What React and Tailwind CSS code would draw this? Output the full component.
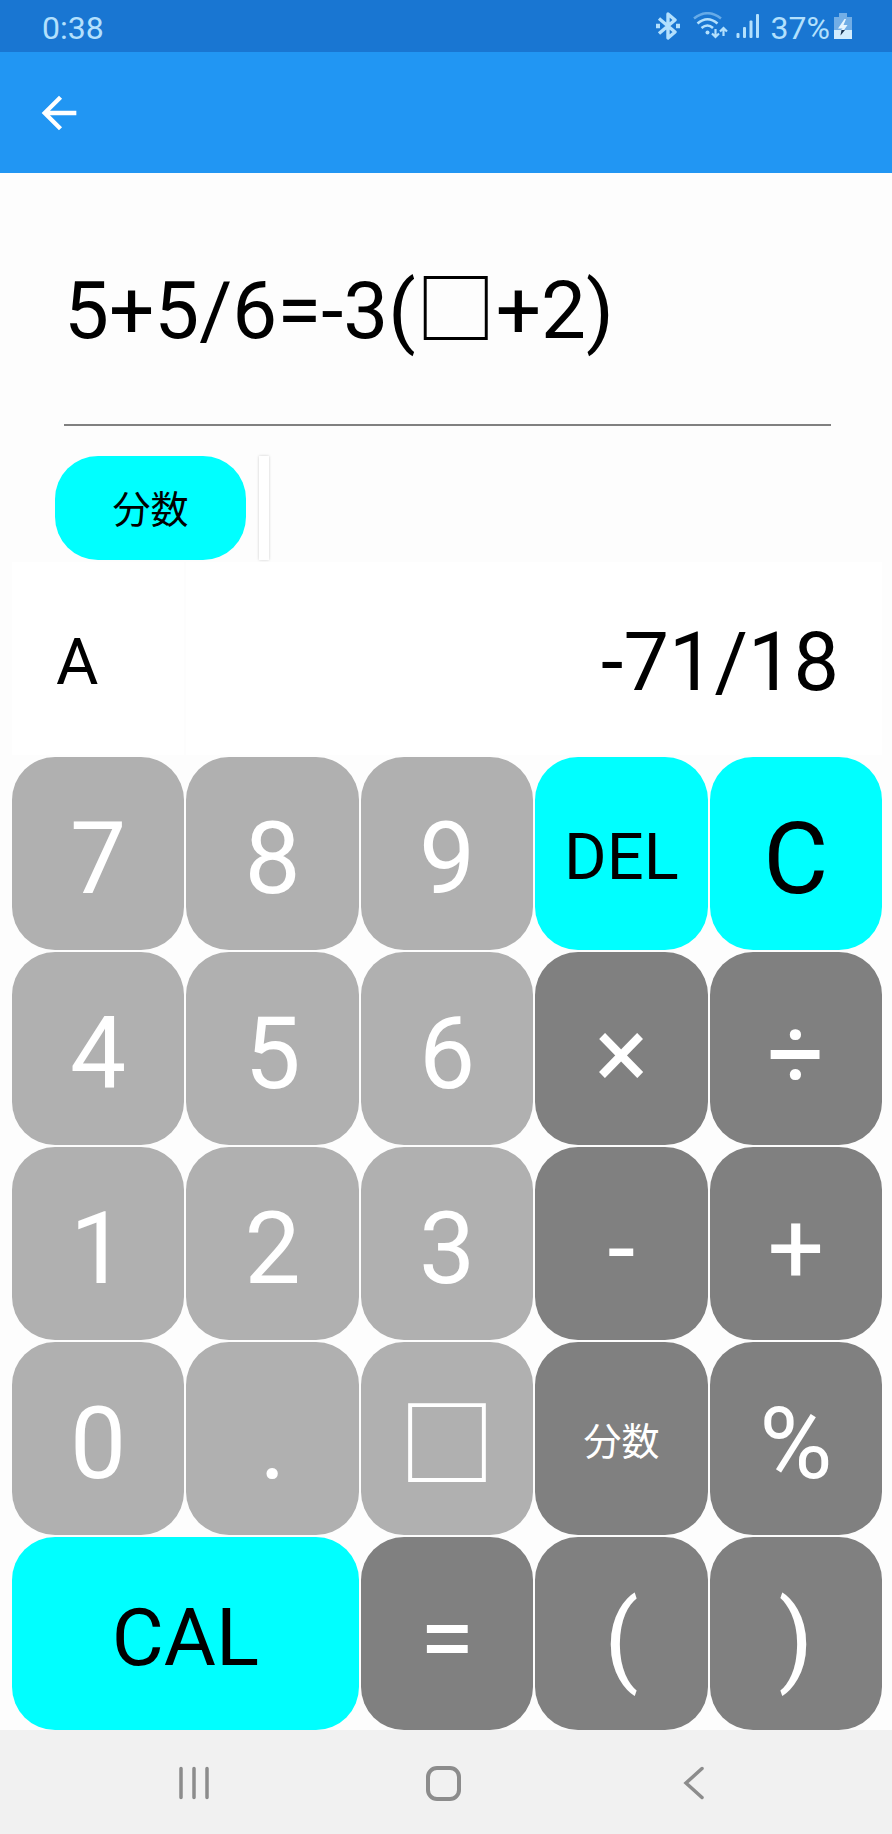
import React from "react";
import { MdArrowBack } from "react-icons/md";

const DIGIT = "bg-[#b0b0b0] text-white text-[100px] pt-[10px]";
const OPERATOR = "bg-[#808080] text-white text-[100px] pt-[10px]";

const keys = [
  { label: "7", style: DIGIT },
  { label: "8", style: DIGIT },
  { label: "9", style: DIGIT },
  { label: "DEL", style: "bg-[#00ffff] text-black text-[65px] pt-2" },
  { label: "C", style: "bg-[#00ffff] text-black text-[100px] pt-[10px]" },
  { label: "4", style: DIGIT },
  { label: "5", style: DIGIT },
  { label: "6", style: DIGIT },
  { label: "×", style: OPERATOR },
  { label: "÷", style: OPERATOR },
  { label: "1", style: DIGIT },
  { label: "2", style: DIGIT },
  { label: "3", style: DIGIT },
  { label: "-", style: OPERATOR },
  { label: "+", style: OPERATOR },
  { label: "0", style: DIGIT },
  { label: ".", style: DIGIT },
  { label: "□", style: "bg-[#b0b0b0] text-white text-[97px] font-medium pt-4" },
  { label: "分数", style: "bg-[#808080] text-white text-[38px] pt-[6px]" },
  { label: "%", style: OPERATOR },
  { label: "CAL", style: "col-span-2 bg-[#00ffff] text-black text-[80px] pt-2" },
  { label: "=", style: OPERATOR },
  { label: "(", style: OPERATOR },
  { label: ")", style: OPERATOR },
];

function StatusBar() {
  return (
    <div className="flex h-[52px] items-center justify-between bg-[#1976d2] pl-[42px] pr-10 text-[32px] leading-none text-[#b3e0fd]">
      <span className="pt-[3px]">0:38</span>
      <div className="flex items-center">
        <svg className="mr-[13px] h-7 w-6" viewBox="0 0 24 28" fill="none" stroke="currentColor" strokeWidth="3.4" strokeLinejoin="round">
          <path d="M3 6.500 L19 20 L12 26 V2 L19 8 L3 21.500" />
          <path d="M0 14 H4 M20 14 H24" strokeWidth="4.500" />
        </svg>
        <svg className="mr-2 h-7 w-[35px]" viewBox="0 0 35 28" fill="none" stroke="currentColor" strokeWidth="2.600">
          <path d="M1 6.500 Q14.500 -4 28 6.500" opacity="0.5" />
          <path d="M4.500 11.500 Q14.500 3 24.500 11.500" />
          <path d="M8.500 16 Q14.500 11 20 16" />
          <circle cx="14.500" cy="20.500" r="2" fill="currentColor" stroke="none" />
          <path d="M22.500 17 V25 M19 21.500 L22.500 25 L26 21.500 M30.500 24 V16 M27 19.500 L30.500 16 L34 19.500" strokeWidth="2.200" />
        </svg>
        <svg className="mr-[11px] h-7 w-6" viewBox="0 0 24 28" fill="currentColor">
          <rect x="0.500" y="21" width="3" height="5" rx="1" />
          <rect x="7" y="15" width="3" height="11" rx="1" />
          <rect x="13.500" y="8.500" width="3" height="17.500" rx="1" />
          <rect x="20" y="2" width="3" height="24" rx="1" />
        </svg>
        <span className="pt-[3px]">37%</span>
        <svg className="ml-1 h-7 w-[18px]" viewBox="0 0 18 28">
          <path d="M5 1 H13 V5 H18 V27 H0 V5 H5 Z" fill="#72aee6" />
          <path d="M0 18 H18 V27 H0 Z" fill="#d3ecfd" />
          <path d="M10.500 7 L4 16.500 H8.500 L7 18 H10 L13.500 13 H9.500 L12 7 Z" fill="#e6f5ff" />
          <path d="M7.500 18 H11 L6.500 23.500 Z" fill="#1c3350" />
        </svg>
      </div>
    </div>
  );
}

function NavigationBar() {
  return (
    <nav className="flex h-[104px] items-center justify-between bg-[#f1f1f1] pl-[172px] pr-[176px] text-[#8c8c8c]">
      <button type="button" aria-label="Recent apps" className="h-11 w-11">
        <svg viewBox="0 0 44 44" fill="none" stroke="currentColor" strokeWidth="3.500" strokeLinecap="round">
          <path d="M9 8.500 V37.500 M22 8.500 V37.500 M35 8.500 V37.500" />
        </svg>
      </button>
      <button type="button" aria-label="Home" className="h-11 w-11">
        <svg viewBox="0 0 44 44" fill="none" stroke="currentColor" strokeWidth="4">
          <rect x="6" y="8" width="31" height="31" rx="9" />
        </svg>
      </button>
      <button type="button" aria-label="Back" className="h-11 w-11">
        <svg viewBox="0 0 44 44" fill="none" stroke="currentColor" strokeWidth="3.500" strokeLinecap="round">
          <path d="M30 8.500 L14 23 L30 37.500" />
        </svg>
      </button>
    </nav>
  );
}

export default function App() {
  return (
    <div className="flex min-h-screen flex-col bg-[#fdfdfd] font-['Roboto','Noto_Sans_CJK_JP',sans-serif] text-black">
      <StatusBar />
      <header className="flex h-[121px] items-center bg-[#2196f3] pl-[33px] text-white">
        <button type="button" aria-label="Navigate up">
          <MdArrowBack className="size-[52px]" />
        </button>
      </header>

      <main className="flex-1">
        <div className="pl-16 pr-[61px] pt-[90px]">
          <input
            type="text"
            aria-label="Equation"
            defaultValue="5+5/6=-3(□+2)"
            className="block w-full border-b-2 border-[#808080] bg-transparent pb-[65px] text-[80px] leading-[96px] outline-none"
          />
        </div>

        <div className="flex gap-[13px] pl-[55px] pt-[30px]">
          <button type="button" className="h-[104px] w-[191px] rounded-[43px] bg-[#00ffff] pt-1 text-[38px] leading-none">
            分数
          </button>
          <div className="w-[10px] bg-white shadow-[0_0_3px_rgba(0,0,0,0.2)]" />
        </div>

        <div className="grid auto-rows-[193px] grid-cols-5 gap-[2px] pl-3 pr-[10px] pt-[2px]">
          <div className="flex items-center bg-white pl-11 pt-2 text-[65px]">A</div>
          <output className="col-span-4 flex items-center justify-end bg-white pr-[43px] pt-2 text-[81px]">-71/18</output>
          {keys.map((key) => (
            <button
              key={key.label}
              type="button"
              className={`flex items-center justify-center rounded-[43px] leading-none ${key.style}`}
            >
              {key.label}
            </button>
          ))}
        </div>
      </main>

      <NavigationBar />
    </div>
  );
}
